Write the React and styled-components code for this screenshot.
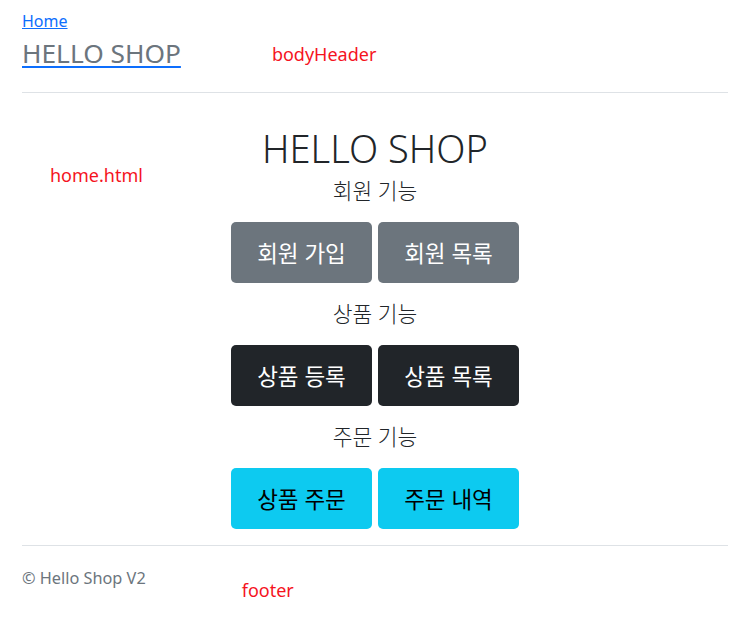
import React from 'react'
import styled, { createGlobalStyle } from 'styled-components'

const GlobalStyle = createGlobalStyle`
  body {
    margin: 0;
    background: #fff;
    font-family: "Noto Sans", "Noto Sans CJK KR", sans-serif;
    color: #212529;
  }
`

const Page = styled.div`
  position: relative;
  padding: 9px 11px 40px 22px;
`

const Note = styled.span`
  color: #f5141e;
  font-size: 18px;
  line-height: 24px;
`

const HomeLink = styled.a`
  display: inline-block;
  color: #0d6efd;
  font-size: 16px;
  line-height: 24px;
  text-decoration: underline;
`

const HeaderRow = styled.div`
  display: flex;
  align-items: center;
  gap: 91px;
  margin-top: 5px;
`

const Brand = styled.a`
  color: #6c757d;
  font-size: 26.3px;
  line-height: 31px;
  text-decoration: underline;
  text-decoration-color: #0d6efd;
  text-decoration-thickness: 2px;
  text-underline-offset: 3px;
`

const Rule = styled.hr`
  border: 0;
  border-top: 1px solid #dee2e6;
  margin: ${p => p.$top}px 0 0;
`

const Main = styled.main`
  position: relative;
  display: flex;
  flex-direction: column;
  align-items: center;
  padding-top: 32px;
  padding-bottom: 16px;
`

const HomeNote = styled(Note)`
  position: absolute;
  left: 28px;
  top: 70px;
`

const Title = styled.h1`
  margin: 0 0 5px;
  font-size: 38px;
  font-weight: 300;
  line-height: 46px;
  color: #212529;
`

const Section = styled.section`
  display: flex;
  flex-direction: column;
  align-items: center;
  & + & {
    margin-top: 16px;
  }
`

const Lead = styled.p`
  margin: 0 0 16px;
  font-size: 21.5px;
  line-height: 30px;
  font-weight: 300;
`

const ButtonRow = styled.div`
  display: flex;
  gap: 6px;
`

const tones = {
  secondary: { bg: '#6c757d', fg: '#fff' },
  dark: { bg: '#212529', fg: '#fff' },
  info: { bg: '#0dcaf0', fg: '#000' },
}

const Button = styled.button`
  width: 141px;
  height: 61px;
  padding: 0;
  border: 0;
  border-radius: 5px;
  font-family: inherit;
  font-size: 22.5px;
  background: ${p => tones[p.$tone].bg};
  color: ${p => tones[p.$tone].fg};
  cursor: pointer;
`

const Footer = styled.footer`
  display: flex;
  gap: 96px;
  margin-top: 20px;
`

const Copy = styled.span`
  color: #6c757d;
  font-size: 16.3px;
  line-height: 24px;
`

const FooterNote = styled(Note)`
  margin-top: 12px;
`

const sections = [
  { label: '회원 기능', tone: 'secondary', buttons: ['회원 가입', '회원 목록'] },
  { label: '상품 기능', tone: 'dark', buttons: ['상품 등록', '상품 목록'] },
  { label: '주문 기능', tone: 'info', buttons: ['상품 주문', '주문 내역'] },
]

const App = () => {
  return (
    <Page>
      <GlobalStyle />
      <header>
        <HomeLink href="#">Home</HomeLink>
        <HeaderRow>
          <Brand href="#">HELLO SHOP</Brand>
          <Note>bodyHeader</Note>
        </HeaderRow>
      </header>
      <Rule $top={23} />

      <Main>
        <HomeNote>home.html</HomeNote>
        <Title>HELLO SHOP</Title>
        {sections.map(s => (
          <Section key={s.label}>
            <Lead>{s.label}</Lead>
            <ButtonRow>
              {s.buttons.map(b => (
                <Button key={b} $tone={s.tone}>{b}</Button>
              ))}
            </ButtonRow>
          </Section>
        ))}
      </Main>

      <Rule $top={0} />
      <Footer>
        <Copy>© Hello Shop V2</Copy>
        <FooterNote>footer</FooterNote>
      </Footer>
    </Page>
  )
}

export default App
